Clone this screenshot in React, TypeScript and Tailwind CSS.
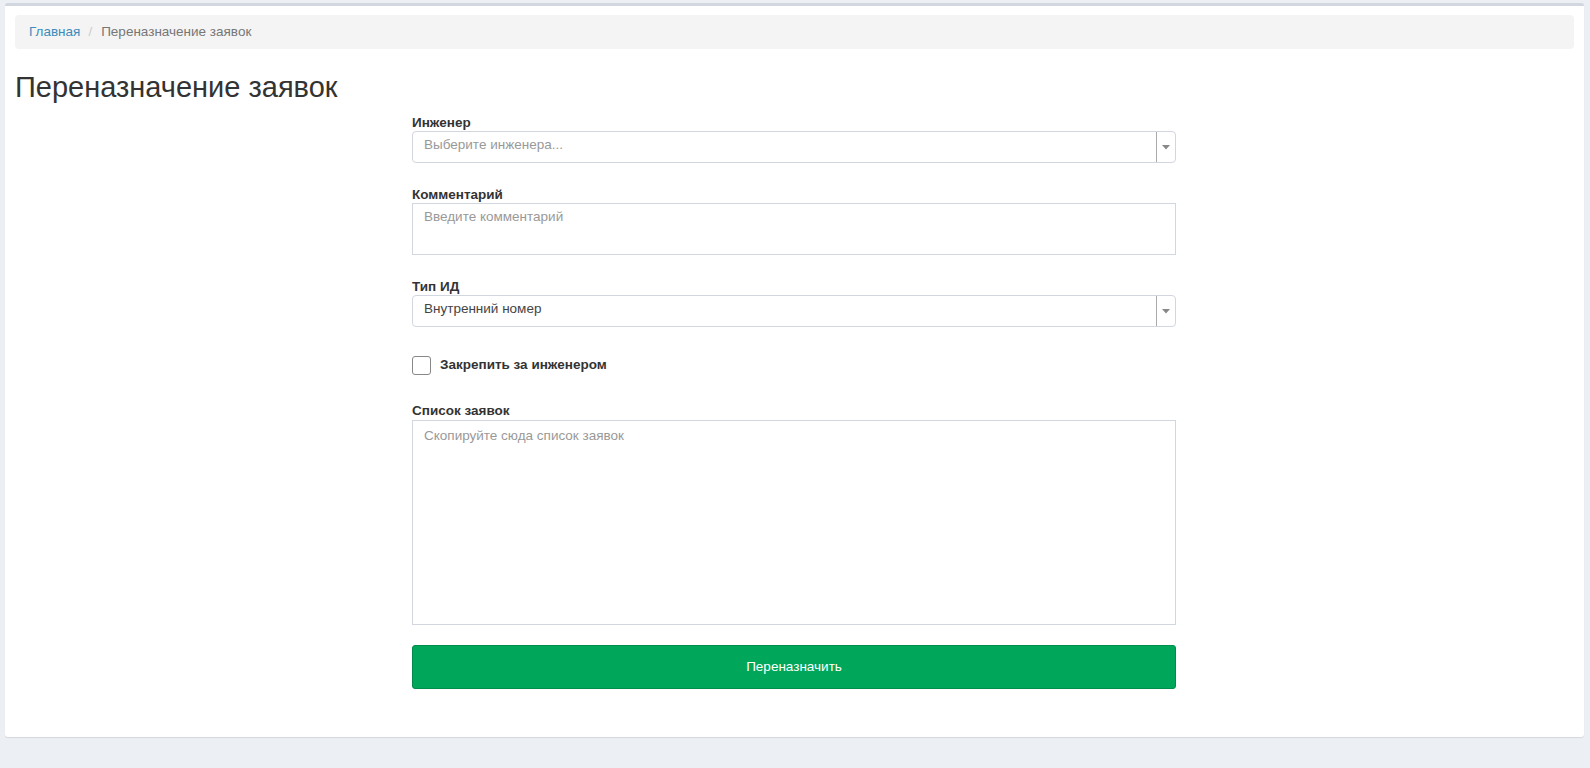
import React from 'react';

const SelectBox = ({ text, placeholder }: { text: string; placeholder?: boolean }) => (
  <div className="flex h-[32px] w-full rounded-[4px] border border-[#d2d6de] bg-white">
    <span className={`flex-1 pl-[11px] leading-[26px] text-[13.5px] ${placeholder ? 'text-[#999]' : 'text-[#444]'}`}>
      {text}
    </span>
    <div className="flex w-[19px] items-center justify-center border-l border-[#aaa]">
      <svg width="8" height="5" viewBox="0 0 8 5">
        <path d="M0 0h8L4 4.5z" fill="#888" />
      </svg>
    </div>
  </div>
);

const App = () => {
  return (
    <div
      className="min-h-[768px] bg-[#ecf0f5] pt-[3px] pl-[5px] pr-[6px]"
      style={{ fontFamily: '"Liberation Sans", Arial, Helvetica, sans-serif' }}
    >
      <div className="rounded-[3px] border-t-[3px] border-[#d2d6de] bg-white px-[10px] pt-[9px] pb-[48px] shadow-[0_1px_1px_rgba(0,0,0,0.1)]">
        {/* breadcrumb */}
        <div className="flex h-[34px] items-center rounded-[4px] bg-[#f4f4f4] px-[14px] text-[13.5px]">
          <a className="text-[#3c8dbc]" href="#">Главная</a>
          <span className="px-[8px] text-[#ccc]">/</span>
          <span className="pl-[1px] text-[#777]">Переназначение заявок</span>
        </div>

        <h1 className="mt-[22px] text-[29px] leading-[33px] text-[#333]">Переназначение заявок</h1>

        <div className="ml-[397px] mt-[11px] w-[764px] text-[#333]">
          <label className="block text-[13.5px] font-bold leading-[16px]">Инженер</label>
          <SelectBox text="Выберите инженера..." placeholder />

          <label className="mt-[24px] block text-[13.5px] font-bold leading-[16px]">Комментарий</label>
          <textarea
            className="block h-[52px] w-full resize-none border border-[#d2d6de] px-[11px] pt-[3px] text-[13.5px] leading-[20px] text-[#555] outline-none placeholder:text-[#999]"
            placeholder="Введите комментарий"
          />

          <label className="mt-[24px] block text-[13.5px] font-bold leading-[16px]">Тип ИД</label>
          <SelectBox text="Внутренний номер" />

          <div className="mt-[28px] flex items-center gap-[9px]">
            <div className="h-[19px] w-[19px] rounded-[3px] border border-[#888] bg-white" />
            <span className="text-[13.5px] font-bold">Закрепить за инженером</span>
          </div>

          <label className="mt-[28px] block text-[13.5px] font-bold leading-[16px]">Список заявок</label>
          <textarea
            className="mt-[1px] block h-[205px] w-full resize-none border border-[#d2d6de] px-[11px] pt-[5px] text-[13.5px] leading-[20px] text-[#555] outline-none placeholder:text-[#999]"
            placeholder="Скопируйте сюда список заявок"
          />

          <button className="mt-[20px] h-[44px] w-full rounded-[3px] border border-[#008d4c] bg-[#00a65a] text-[13.5px] text-white">
            Переназначить
          </button>
        </div>
      </div>
    </div>
  );
};

export default App;
